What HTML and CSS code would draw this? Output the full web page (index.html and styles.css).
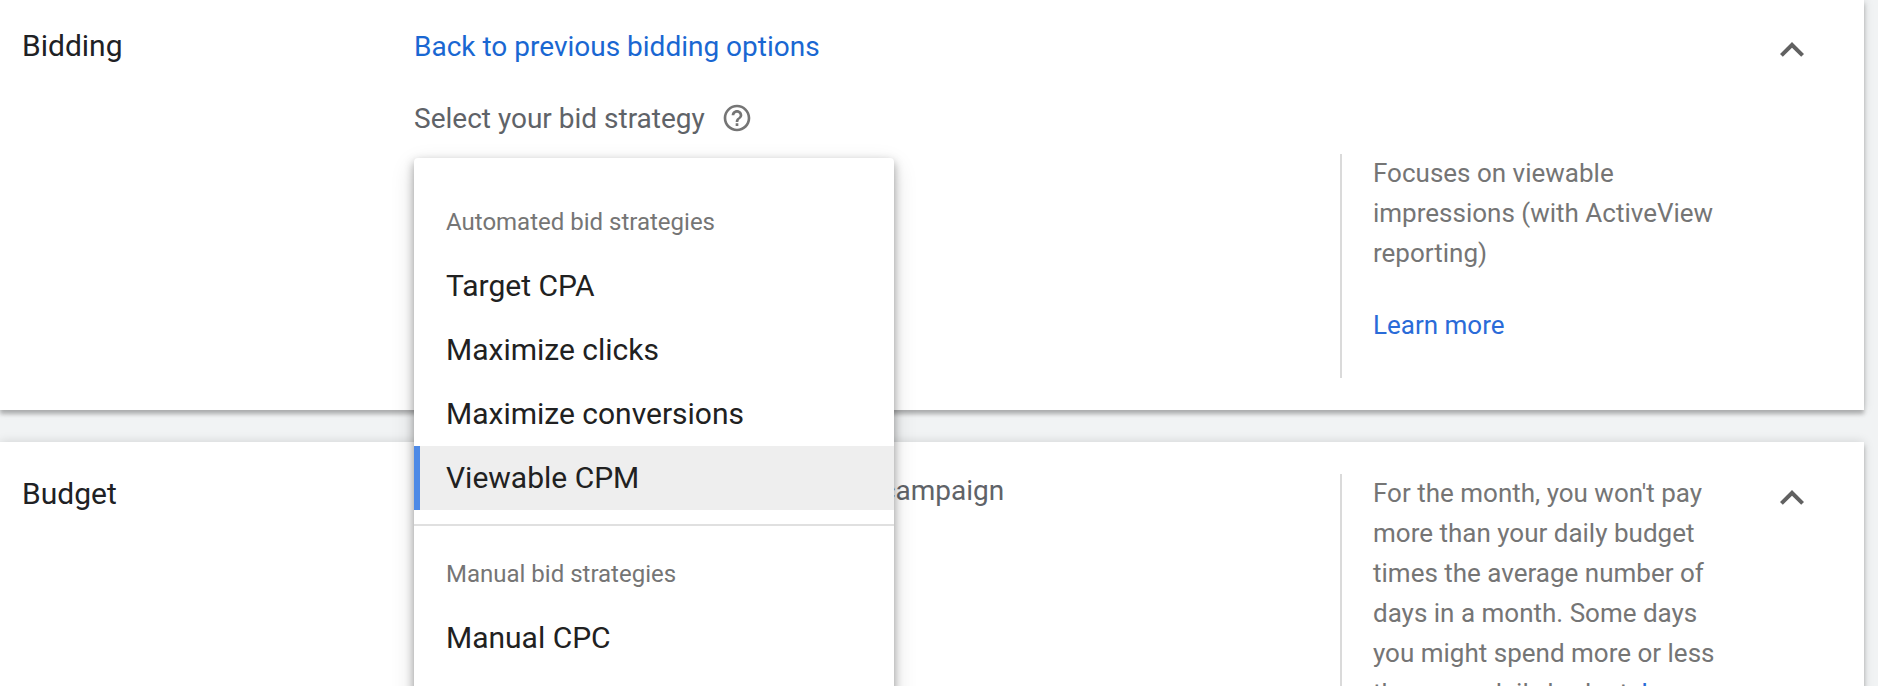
FILE: index.html
```
<!DOCTYPE html>
<html lang="en">
<head>
<meta charset="utf-8">
<title>Campaign settings</title>
<link rel="stylesheet" href="styles.css">
</head>
<body>
<main class="page">
  <section class="card bidding">
    <h2 class="card-title">Bidding</h2>
    <div class="card-body">
      <a class="back-link">Back to previous bidding options</a>
      <div class="field-label">
        <span>Select your bid strategy</span>
        <svg class="help" viewBox="0 0 24 24"><path d="M11 18h2v-2h-2v2zm1-16C6.480 2 2 6.480 2 12s4.480 10 10 10 10-4.480 10-10S17.520 2 12 2zm0 18c-4.410 0-8-3.590-8-8s3.590-8 8-8 8 3.590 8 8-3.590 8-8 8zm0-14c-2.210 0-4 1.790-4 4h2c0-1.100.9-2 2-2s2 .9 2 2c0 2-3 1.750-3 5h2c0-2.250 3-2.500 3-5 0-2.210-1.790-4-4-4z"/></svg>
      </div>
      <div class="dropdown">
        <div class="menu">
          <div class="menu-heading">Automated bid strategies</div>
          <div class="menu-item">Target CPA</div>
          <div class="menu-item">Maximize clicks</div>
          <div class="menu-item">Maximize conversions</div>
          <div class="menu-item selected">Viewable CPM</div>
          <div class="menu-divider"></div>
          <div class="menu-heading">Manual bid strategies</div>
          <div class="menu-item">Manual CPC</div>
        </div>
      </div>
    </div>
    <aside class="card-help">
      <p>Focuses on viewable<br>impressions (with ActiveView<br>reporting)</p>
      <p><a>Learn more</a></p>
    </aside>
    <svg class="chevron" viewBox="0 0 24 15"><path d="M12 0 0 12l2.820 2.820L12 5.660l9.180 9.160L24 12z"/></svg>
  </section>

  <section class="card budget">
    <h2 class="card-title">Budget</h2>
    <div class="card-body">
      <div class="budget-label">Set your average daily budget for this campaign</div>
    </div>
    <aside class="card-help">
      <p>For the month, you won't pay<br>more than your daily budget<br>times the average number of<br>days in a month. Some days<br>you might spend more or less<br>than your daily budget. <a>Learn</a></p>
    </aside>
    <svg class="chevron" viewBox="0 0 24 15"><path d="M12 0 0 12l2.820 2.820L12 5.660l9.180 9.160L24 12z"/></svg>
  </section>
</main>
</body>
</html>
```
FILE: styles.css
```
* { box-sizing: border-box; }

body {
  margin: 0;
  background: #f1f3f4;
  font-family: Roboto, "Liberation Sans", sans-serif;
  color: #202124;
}

.page {
  display: flex;
  flex-direction: column;
  gap: 32px;
  height: 686px;
  padding-right: 14px;
  overflow: hidden;
}

.card {
  display: grid;
  grid-template-columns: 392px 926px 438px 86px;
  flex: none;
  align-items: start;
  padding-left: 22px;
  background: #fff;
  box-shadow: 0 4px 4px rgba(0, 0, 0, .24), 0 0 10px rgba(0, 0, 0, .14);
}

.bidding { height: 410px; }
.budget { height: 400px; }

.card-title {
  margin: 26px 0 0;
  font-size: 30px;
  font-weight: 400;
  line-height: 40px;
}

.card-body { padding-top: 27px; }

.back-link {
  display: block;
  font-size: 28px;
  line-height: 40px;
  color: #1967d2;
}

.field-label {
  display: flex;
  align-items: flex-start;
  gap: 16px;
  margin-top: 32px;
  font-size: 28px;
  line-height: 40px;
  color: #5f6368;
}

.help { width: 32px; height: 32px; margin-top: 3px; fill: #757575; }

.dropdown { position: relative; margin-top: 19px; }

.menu {
  position: absolute;
  top: 0;
  left: 0;
  z-index: 2;
  width: 480px;
  height: 600px;
  padding-top: 32px;
  border-radius: 4px;
  background: #fff;
  box-shadow: 0 4px 10px rgba(0, 0, 0, .35), 0 8px 24px rgba(0, 0, 0, .14);
}

.menu-heading {
  padding-left: 32px;
  font-size: 24px;
  line-height: 64px;
  color: #757575;
}

.menu-item {
  padding-left: 32px;
  font-size: 30px;
  line-height: 64px;
  color: #212121;
}

.menu-item.selected {
  padding-left: 26px;
  border-left: 6px solid #4e8ae6;
  background: #eee;
}

.menu-divider {
  height: 2px;
  margin: 14px 0 16px;
  background: #e0e0e0;
}

.card-help {
  margin-top: 154px;
  height: 224px;
  padding-left: 31px;
  border-left: 2px solid #dadada;
  font-size: 26px;
  line-height: 40px;
  white-space: nowrap;
  color: #757575;
}

.card-help p { margin: -1px 0 33px; }
.card-help a { color: #2a6bd8; }

.budget .card-help { margin-top: 32px; height: 300px; }
.budget .card-title { margin-top: 32px; }
.budget .card-body { padding-top: 29px; }

.budget-label {
  font-size: 28px;
  line-height: 40px;
  color: #5f6368;
}

.chevron {
  width: 24px;
  height: 15px;
  margin: 42px 0 0 2px;
  fill: #616161;
}

.budget .chevron { margin-top: 48px; }
```
